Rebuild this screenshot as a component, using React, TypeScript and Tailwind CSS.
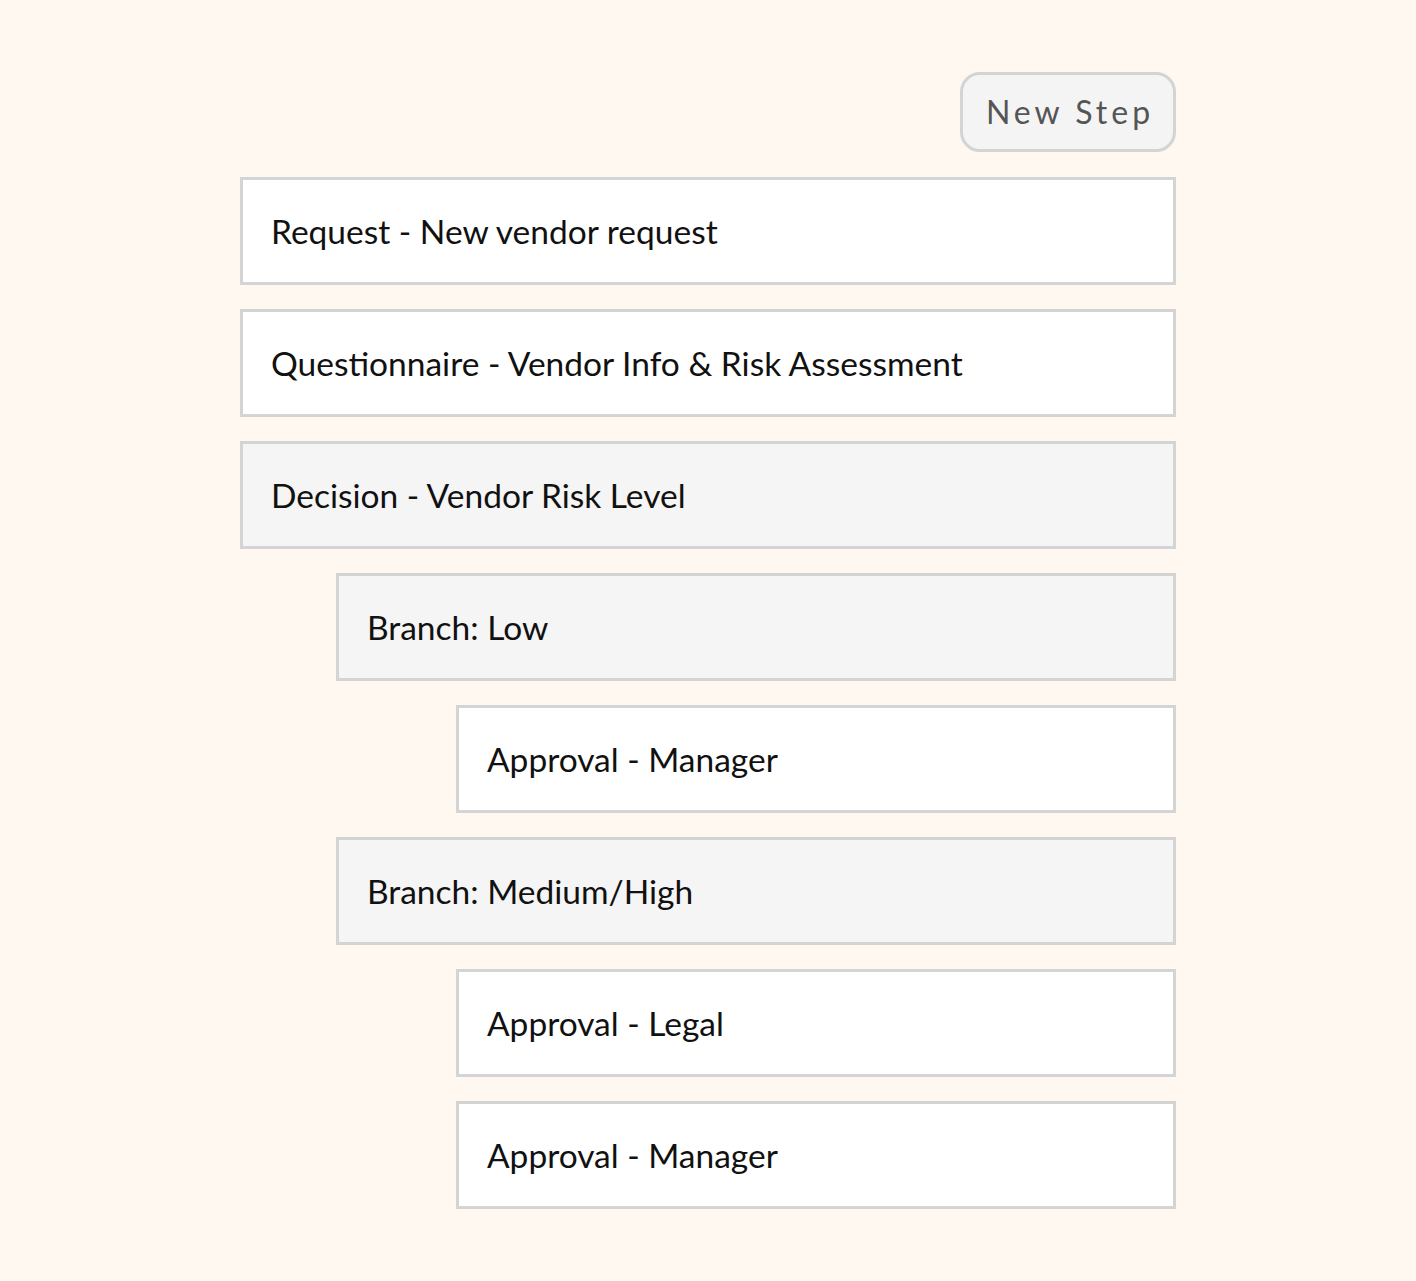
type Step = {
  label: string;
  indent: 0 | 1 | 2;
  shaded?: boolean;
};

const STEPS: Step[] = [
  { label: 'Request - New vendor request', indent: 0 },
  { label: 'Questionnaire - Vendor Info & Risk Assessment', indent: 0 },
  { label: 'Decision - Vendor Risk Level', indent: 0, shaded: true },
  { label: 'Branch: Low', indent: 1, shaded: true },
  { label: 'Approval - Manager', indent: 2 },
  { label: 'Branch: Medium/High', indent: 1, shaded: true },
  { label: 'Approval - Legal', indent: 2 },
  { label: 'Approval - Manager', indent: 2 },
];

const INDENT_CLASSES = ['ml-0', 'ml-[96px]', 'ml-[216px]'];

export default function App() {
  return (
    <div className="min-h-screen bg-[#fff8f1] font-['Lato',sans-serif] text-[#111]">
      <div className="mx-auto w-[936px] pt-[72px] pb-[72px]">
        <div className="flex justify-end mb-[25px]">
          <button
            type="button"
            className="h-[80px] w-[216px] rounded-[20px] border-[3px] border-[#d4d4d4] bg-[#f4f4f4] pl-[4px] text-[32px] tracking-[4px] text-[#555]"
          >
            New Step
          </button>
        </div>

        <div className="flex flex-col gap-6">
          {STEPS.map((step, i) => (
            <div
              key={i}
              className={`${INDENT_CLASSES[step.indent]} flex h-[108px] items-center border-[3px] border-[#d4d4d4] px-[28px] text-[33.5px] ${
                step.shaded ? 'bg-[#f5f5f5]' : 'bg-white'
              }`}
            >
              {step.label}
            </div>
          ))}
        </div>
      </div>
    </div>
  );
}
